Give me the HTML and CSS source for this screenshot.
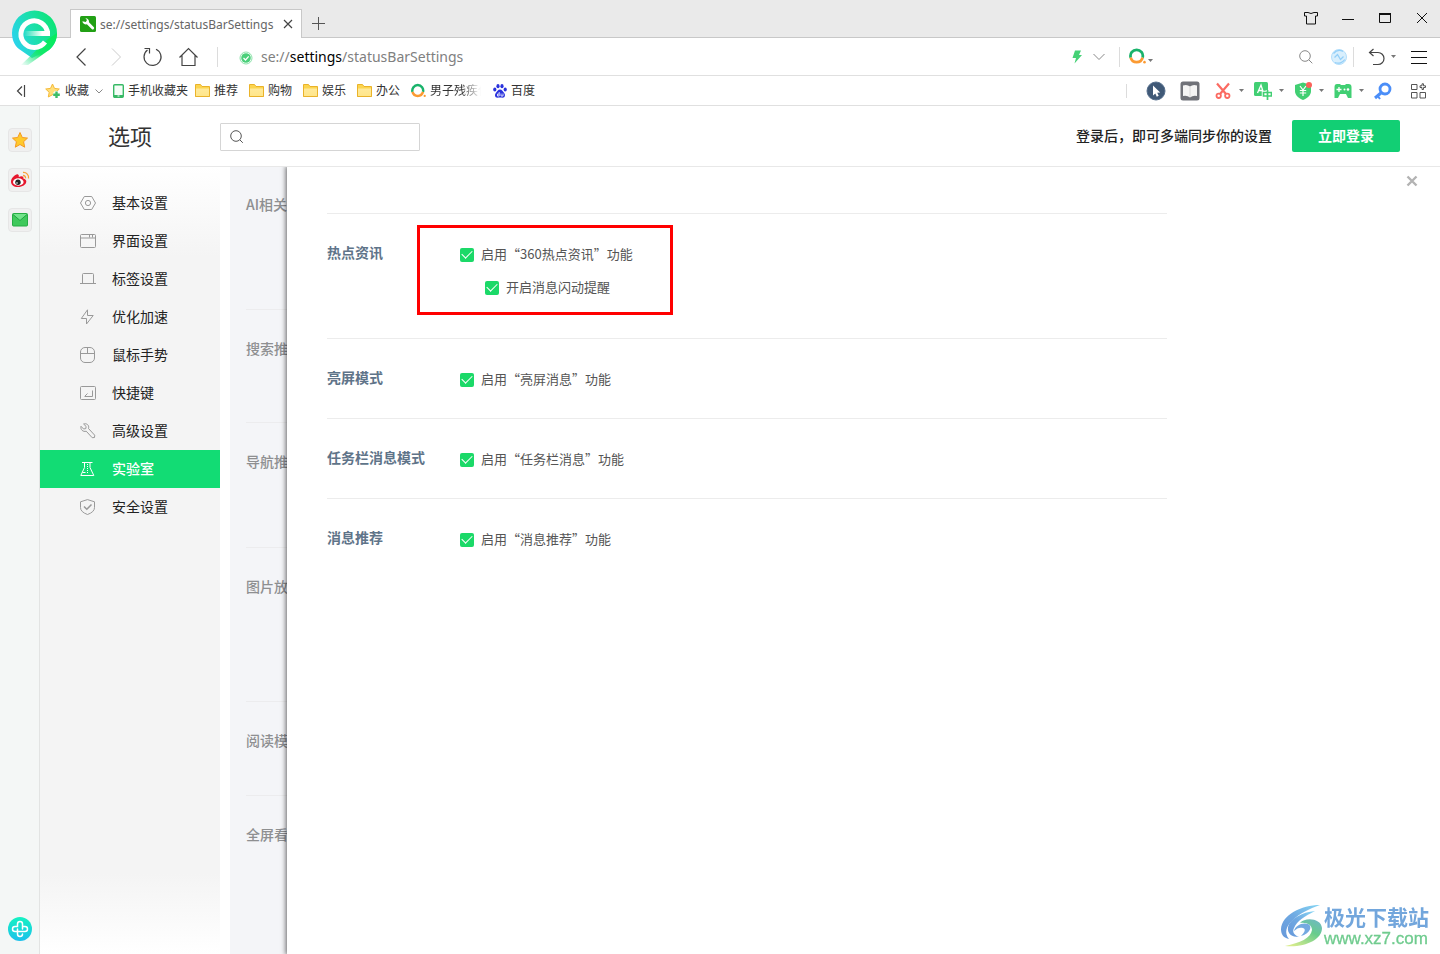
FILE: index.html
```html
<!DOCTYPE html>
<html lang="zh-CN">
<head>
<meta charset="utf-8">
<title>选项</title>
<link rel="stylesheet" href="styles.css">
</head>
<body>
<svg class="defs" width="0" height="0" aria-hidden="true">
  <defs>
    <linearGradient id="folderFill" x1="0" y1="0" x2="0" y2="1"><stop offset="0" stop-color="#ffe99b"/><stop offset="1" stop-color="#ffe68a"/></linearGradient>
  </defs>
  <symbol id="folder" viewBox="0 0 15 14">
    <path d="M.5 12.500V.5h5l1.500 2h7.500v10z" fill="#fcd54f" stroke="#eab32a"/>
    <path d="M1 4.500h13V12H1z" fill="url(#folderFill)"/>
    <path d="M.5 12.500h14" stroke="#e9b22b"/>
  </symbol>
  <symbol id="so" viewBox="0 0 16 16">
    <path d="M1.600 9a5.800 5.800 0 1 1 11.200 0" fill="none" stroke="#19b36b" stroke-width="2.600"/>
    <path d="M1.600 9a5.800 5.800 0 0 0 11.200 0" fill="none" stroke="#fb9a32" stroke-width="2.600"/>
    <circle cx="14.600" cy="13.300" r="1.200" fill="#fb9a32"/>
  </symbol>
  <symbol id="caret" viewBox="0 0 5 3"><path d="M0 0h5L2.500 3z" fill="#777"/></symbol>
</svg>

<header class="titlebar">
  <svg class="logo" width="48" height="58" viewBox="0 0 48 58" role="img" aria-label="360">
    <defs>
      <linearGradient id="lg" x1="0" y1=".7" x2="1" y2=".3"><stop offset="0" stop-color="#2bd2f2"/><stop offset=".5" stop-color="#1ddfae"/><stop offset="1" stop-color="#0be573"/></linearGradient>
      <linearGradient id="tail" x1="1" y1="0" x2="0" y2="1"><stop offset="0" stop-color="#03ec5c"/><stop offset=".55" stop-color="#13e86b"/><stop offset="1" stop-color="#3fe6a0" stop-opacity=".05"/></linearGradient>
      <linearGradient id="bar" x1="0" x2="1"><stop offset="0" stop-color="#fff" stop-opacity="0"/><stop offset=".7" stop-color="#fff"/></linearGradient>
    </defs>
    <path d="M2 24a22.500 22.500 0 1 1 45 0c0 7-3 13-8 17L22 49 9 40C4 36 2 30 2 24z" fill="url(#lg)"/>
    <path d="M47 24c0 8-4 13-8 17L18 56H11L38 30z" fill="url(#tail)"/>
    <path d="M37.500 24.500A13.300 13.300 0 1 0 35 33" fill="none" stroke="#fff" stroke-width="5"/>
    <path d="M14 22h26v5H14z" fill="url(#bar)"/>
  </svg>
  <div class="tab">
    <svg width="16" height="16" viewBox="0 0 16 16"><rect width="16" height="16" rx="1.500" fill="#22a015"/><path d="M2.400 5.200a3.500 3.500 0 0 0 4.500 3.100l4.800 4.700a1.400 1.400 0 0 0 2-2L9 6.300A3.500 3.500 0 0 0 5.400 2.200L7 4 5.800 6z" fill="#fff"/></svg>
    <span class="tab-title">se://settings/statusBarSettings</span>
    <button class="icon-btn" aria-label="关闭标签"><svg width="10" height="10" viewBox="0 0 10 10" class="line nav"><path d="M1 1l8 8M9 1L1 9"/></svg></button>
  </div>
  <button class="icon-btn new-tab" aria-label="新标签"><svg width="14" height="14" viewBox="0 0 14 14" class="line"><path d="M7 .5v13M.5 7h13" shape-rendering="crispEdges"/></svg></button>
  <div class="window-buttons">
    <button class="icon-btn" aria-label="皮肤"><svg width="16" height="14" viewBox="0 0 16 14" class="line dark"><path d="M1.500 1.500h3.500q3 2 6 0h3.500v3.500h-2v8h-9V5h-2z"/></svg></button>
    <button class="icon-btn" aria-label="最小化"><svg width="12" height="12" viewBox="0 0 12 12" class="line dark"><path d="M0 7.500h12"/></svg></button>
    <button class="icon-btn" aria-label="最大化"><svg width="12" height="12" viewBox="0 0 12 12" class="line dark"><path d="M.5 1.500h11v9H.5z"/><path d="M0 2h12" stroke-width="2"/></svg></button>
    <button class="icon-btn" aria-label="关闭"><svg width="12" height="12" viewBox="0 0 12 12" class="line dark"><path d="M1 1l10 10M11 1L1 11"/></svg></button>
  </div>
</header>

<div class="toolbar">
  <div class="nav-buttons">
    <button class="icon-btn" aria-label="后退"><svg width="20" height="20" viewBox="0 0 20 20" class="line nav"><path d="M14.500 1.500L6 10l8.500 8.500"/></svg></button>
    <button class="icon-btn" aria-label="前进"><svg width="20" height="20" viewBox="0 0 20 20" class="line faint"><path d="M5 1.500L13.500 10 5 18.500"/></svg></button>
    <button class="icon-btn" aria-label="刷新"><svg width="20" height="20" viewBox="0 0 20 20" class="line nav"><path d="M13 2.200A8.500 8.500 0 1 1 4.500 3.100M1.500 1.500h5v5"/></svg></button>
    <button class="icon-btn" aria-label="主页"><svg width="20" height="20" viewBox="0 0 20 20" class="line nav"><path d="M.5 10.500L9.500 1.500l9 9M3 8.500v10h13v-10"/></svg></button>
  </div>
  <span class="sep"></span>
  <div class="address">
    <svg width="14" height="14" viewBox="0 0 14 14"><circle cx="7" cy="7" r="6" fill="#fff" stroke="#8ee3ab"/><circle cx="7" cy="7" r="4.800" fill="#4bd07a"/><path d="M4.500 7l2 2 3.200-3.700" fill="none" stroke="#fff" stroke-width="1.200"/></svg>
    <div class="url">se://<b>settings</b>/statusBarSettings</div>
  </div>
  <button class="icon-btn slot" aria-label="极速模式"><svg width="12" height="14" viewBox="0 0 12 14"><path d="M4 .5h6L8 5h3L3.500 13.500 5 8H1.500z" fill="#45d176"/></svg></button>
  <button class="icon-btn slot" aria-label="展开"><svg width="12" height="8" viewBox="0 0 12 8" class="line gray"><path d="M.5 1L6 6.500 11.500 1"/></svg></button>
  <span class="sep wide"></span>
  <button class="icon-btn engine" aria-label="搜索引擎"><svg width="17" height="17" viewBox="0 0 17 17"><use href="#so" width="17" height="17"/></svg><svg class="caret low" width="5" height="3"><use href="#caret"/></svg></button>
  <input class="quick-search" type="text" aria-label="搜索">
  <button class="icon-btn slot" aria-label="搜索"><svg width="14" height="14" viewBox="0 0 14 14" class="line gray"><circle cx="6" cy="6" r="5.300"/><path d="M9.800 9.800l3.500 3.500"/></svg></button>
  <button class="icon-btn shield" aria-label="同步"><svg width="16" height="16" viewBox="0 0 16 16"><circle cx="8" cy="8" r="7.500" fill="#d9effd" stroke="#b3defb"/><path d="M2.500 4.500A8 8 0 0 1 12 2.300M13.800 10.500A8 8 0 0 1 4 13.500M3.500 8.500l3-3 3 5 3-3" fill="none" stroke="#93cff8" stroke-width="1.300"/></svg></button>
  <span class="sep"></span>
  <button class="icon-btn undo" aria-label="撤销"><svg width="18" height="18" viewBox="0 0 18 18" class="line nav"><path d="M5.500 1L1.500 4.500l4 3.500M1.500 4.500H10a6 6 0 0 1 0 12H5"/></svg><svg class="caret" width="5" height="3"><use href="#caret"/></svg></button>
  <button class="icon-btn menu" aria-label="菜单"><svg width="16" height="14" viewBox="0 0 16 14" class="line dark"><path d="M0 1.500h16M0 7.500h16M0 13.500h16"/></svg></button>
</div>

<nav class="bookmarks" aria-label="收藏栏">
  <div class="pinned">
    <button class="icon-btn" aria-label="收起"><svg width="10" height="12" viewBox="0 0 10 12" class="line nav"><path d="M6 1.500L1.500 6 6 10.500M8.500 0v12"/></svg></button>
    <button class="mark fav"><svg width="16" height="16" viewBox="0 0 16 16"><path d="M7.500 1l2 4.400 4.800.6-3.500 3.300.9 4.700-4.200-2.300L3.300 14l.9-4.700L.7 6l4.800-.6z" fill="#ffdf7a" stroke="#f5b936"/><path d="M11.500 8v7M8 11.500h7" stroke="#fff" stroke-width="4"/><path d="M11.500 8.500v6.500M8.200 11.700h6.600" stroke="#3dbd68" stroke-width="2.400"/></svg><span>收藏</span><svg class="fav-more line gray" width="8" height="6" viewBox="0 0 8 6"><path d="M.5 1.500L4 5l3.500-3.500"/></svg></button>
    <a class="mark" href="#"><svg width="11" height="14" viewBox="0 0 11 14"><rect x=".7" y=".7" width="9.600" height="12.600" rx="1" fill="#f4fdf7" stroke="#37b965" stroke-width="1.400"/><path d="M1 11h9v2H1z" fill="#37b965"/><path d="M4.500 12h2" stroke="#fff"/></svg><span>手机收藏夹</span></a>
  </div>
  <div class="folders">
    <a class="mark" href="#"><svg width="15" height="14"><use href="#folder"/></svg><span>推荐</span></a>
    <a class="mark" href="#"><svg width="15" height="14"><use href="#folder"/></svg><span>购物</span></a>
    <a class="mark" href="#"><svg width="15" height="14"><use href="#folder"/></svg><span>娱乐</span></a>
    <a class="mark" href="#"><svg width="15" height="14"><use href="#folder"/></svg><span>办公</span></a>
    <a class="mark" href="#"><svg width="15" height="16"><use href="#so"/></svg><span class="fade">男子残疾住</span></a>
    <a class="mark" href="#"><svg width="14" height="14" viewBox="0 0 14 14" fill="#2a32dc"><ellipse cx="1.800" cy="5.500" rx="1.600" ry="2"/><ellipse cx="5" cy="2.200" rx="1.600" ry="2.100"/><ellipse cx="9" cy="2.200" rx="1.600" ry="2.100"/><ellipse cx="12.200" cy="5.500" rx="1.600" ry="2"/><path d="M7 5.500c2 0 2.500 1.800 4 3.200 1.500 1.500 1.500 5-1.500 5-1 0-1.500-.2-2.500-.2s-1.500.2-2.500.2c-3 0-3-3.500-1.500-5C4.500 7.300 5 5.500 7 5.500z"/><path d="M6.200 8v4H4.500v-2h1.700M8 9.500V12h2V9.500" fill="none" stroke="#fff" stroke-width=".8"/></svg><span>百度</span></a>
  </div>
  <div class="extensions">
    <span class="sep short"></span>
    <button class="icon-btn" aria-label="鼠标"><svg width="20" height="20" viewBox="0 0 20 20"><circle cx="10" cy="10" r="9" fill="#405977" stroke="#57708e"/><path d="M7 4.500v10l2.300-2 1.500 3.200 1.900-.9-1.500-3.100 3-.3z" fill="#fff"/></svg></button>
    <button class="icon-btn" aria-label="阅读"><svg width="20" height="20" viewBox="0 0 20 20"><rect x=".5" y=".5" width="19" height="19" rx="2.500" fill="#6f7178"/><path d="M3 4.500q4-1.500 7 1 3-2.500 7-1V15q-4-1-7 1.500Q7 14 3 15z" fill="#f4f4f4"/><path d="M10 6v10" stroke="#d8d8d8"/></svg></button>
    <button class="icon-btn ext" aria-label="截图"><svg width="18" height="18" viewBox="0 0 18 18" fill="none" stroke="#fb6b62" stroke-width="2.200"><path d="M3 1.500l9 10.500M15 1.500L6 12"/><circle cx="4.700" cy="13.800" r="2.200" stroke-width="1.800"/><circle cx="13.300" cy="13.800" r="2.200" stroke-width="1.800"/></svg><svg width="5" height="3"><use href="#caret"/></svg></button>
    <button class="icon-btn ext" aria-label="翻译"><svg width="18" height="18" viewBox="0 0 18 18"><rect width="14" height="14" rx="1.500" fill="#41cf73"/><path d="M3.500 11L7 3l2.500 8M4.700 8.500h4" fill="none" stroke="#fff" stroke-width="1.300"/><path d="M13.500 8v10M9.500 10.500h8v3.500h-8z" fill="none" stroke="#fff" stroke-width="3.500"/><path d="M13.500 8v10M9.500 10.500h8v3.500h-8z" fill="none" stroke="#41cf73" stroke-width="1.700"/></svg><svg width="5" height="3"><use href="#caret"/></svg></button>
    <button class="icon-btn ext" aria-label="网购"><svg width="18" height="18" viewBox="0 0 18 18"><path d="M9 .5L17 3v6c0 4-3 7-8 9-5-2-8-5-8-9V3z" fill="#41cf73"/><path d="M6 4l3 4 3-4M9 8v6M5.800 8.500h6.400M5.800 11h6.400" fill="none" stroke="#fff" stroke-width="1.200"/><circle cx="15" cy="3" r="3" fill="#fb625a"/></svg><svg width="5" height="3"><use href="#caret"/></svg></button>
    <button class="icon-btn ext" aria-label="游戏"><svg width="18" height="18" viewBox="0 0 18 18"><path d="M3 2h3l1 1h4l1-1h2.500q3 0 3 3v11H14l-2-4H6l-2 4H.5V5q0-3 2.500-3z" fill="#41cf73"/><path d="M2.500 7.500h5M5 5v5" stroke="#fff" stroke-width="1.300"/><circle cx="10.500" cy="7.500" r="1" fill="#fff"/><circle cx="14" cy="7.500" r="1.300" fill="#fff"/></svg><svg width="5" height="3"><use href="#caret"/></svg></button>
    <button class="icon-btn" aria-label="密码"><svg width="18" height="18" viewBox="0 0 18 18" fill="none" stroke="#4b8ef8"><circle cx="11" cy="7" r="5" stroke-width="2.800"/><path d="M7.500 10.500L1 16" stroke-width="3"/><path d="M3 13l3 4" stroke-width="2"/></svg></button>
    <button class="icon-btn grid-btn" aria-label="扩展"><svg width="16" height="16" viewBox="0 0 16 16" class="line"><path d="M.5 1.500h5.500v5H.5zM.5 9.500h5.500v5.500H.5zM9 9.500h5.500v5.500H9zM11 .8h1.500v2h2v1.700h-2v2H11v-2H9V2.800h2z"/></svg></button>
  </div>
</nav>

<div class="workspace">
  <aside class="rail">
    <button class="rail-btn" aria-label="收藏"><svg width="18" height="18" viewBox="0 0 18 18"><path d="M9 1.500l2.300 5 5.200.6-3.900 3.600 1.100 5.500L9 13.500l-4.700 2.700 1.100-5.500L1.500 7.100l5.200-.6z" fill="#ffca2d" stroke="#f59a23"/></svg></button>
    <button class="rail-btn" aria-label="微博"><svg width="20" height="18" viewBox="0 0 20 18"><path d="M1 10.500C1 7 6 2.500 8 3.500c1 .5 1 1.500.7 2.500C12 4.500 14 5.500 13.300 7.500c2 .5 3 1.700 3 3 0 3-4 5.500-8.300 5.500S1 14 1 10.500z" fill="#e6162d"/><ellipse cx="8.300" cy="11" rx="5.300" ry="3.700" fill="#fff"/><circle cx="8" cy="11.200" r="2.700" fill="#222"/><circle cx="7" cy="12" r=".8" fill="#fff"/><path d="M13 1.500a5 5 0 0 1 5.500 6M13 4.500a2.300 2.300 0 0 1 2.500 2.800" fill="none" stroke="#f8a13a" stroke-width="1.300"/></svg></button>
    <button class="rail-btn" aria-label="邮件"><svg width="16" height="14" viewBox="0 0 16 14"><rect x=".5" y=".5" width="15" height="12.500" rx="1" fill="#40c95c" stroke="#27ad45"/><path d="M1 1h14L8 7.500z" fill="#72e38a"/><path d="M1 1.500l7 6 7-6" fill="none" stroke="#20a542"/></svg></button>
    <button class="icon-btn rail-add" aria-label="添加"><svg width="24" height="24" viewBox="0 0 24 24"><defs><linearGradient id="add" x1="0" y1="0" x2="0" y2="1"><stop offset="0" stop-color="#15f3c2"/><stop offset="1" stop-color="#1bc0ec"/></linearGradient></defs><circle cx="12" cy="12" r="12" fill="url(#add)"/><path d="M14.500 12V7a2.500 2.500 0 0 0-5 0v2.500H7a2.500 2.500 0 0 0 0 5h10a2.500 2.500 0 0 0 0-5h-2.500M9.500 12v5a2.500 2.500 0 0 0 5 0" fill="none" stroke="#fff" stroke-width="1.500" stroke-linecap="round"/></svg></button>
  </aside>

  <main class="page">
    <div class="page-head">
      <h1>选项</h1>
      <label class="search"><svg width="14" height="14" viewBox="0 0 14 14" class="line"><circle cx="6" cy="6" r="5.300"/><path d="M9.800 9.800l3 3"/></svg><input type="text" aria-label="搜索设置"></label>
      <p class="sync">登录后，即可多端同步你的设置</p>
      <button class="login">立即登录</button>
    </div>

    <div class="body">
      <nav class="side" aria-label="设置">
        <a href="#"><svg width="16" height="16" viewBox="0 0 16 16"><path d="M4.300 1.500h7.400L15.500 8l-3.800 6.500H4.300L.5 8z"/><circle cx="8" cy="8" r="2.600"/></svg><span>基本设置</span></a>
        <a href="#"><svg width="16" height="16" viewBox="0 0 16 16"><rect x=".5" y="1.500" width="15" height="13" rx="1"/><path d="M.5 5h15M9.500 2v2.500M12.500 2v2.500"/></svg><span>界面设置</span></a>
        <a href="#"><svg width="16" height="16" viewBox="0 0 16 16"><path d="M0 12.500h16M2.500 12V3.500q0-1 1-1h9q1 0 1 1V12"/></svg><span>标签设置</span></a>
        <a href="#"><svg width="16" height="16" viewBox="0 0 16 16"><path d="M7.500.8v5.700h5.700L6.500 15V9.500H1.300z"/></svg><span>优化加速</span></a>
        <a href="#"><svg width="16" height="16" viewBox="0 0 16 16"><rect x=".5" y=".5" width="14" height="15" rx="4.500"/><path d="M.5 6.500h14M7.500.5v6"/></svg><span>鼠标手势</span></a>
        <a href="#"><svg width="16" height="16" viewBox="0 0 16 16"><rect x=".5" y="1.500" width="15" height="13" rx="1"/><path d="M12.500 5.500v6H5M7.500 8.500l-3 3"/></svg><span>快捷键</span></a>
        <a href="#"><svg width="16" height="16" viewBox="0 0 16 16"><path d="M1 3.300L3.600 6l2.200-.4.300-2.200L3.600 1C6.500 0 9.500 2 8.500 5.500l6.200 6.700-.2 2.300-2.300.2-6-6.500C3 9.200.2 6.500 1 3.300z"/></svg><span>高级设置</span></a>
        <a class="active" href="#" aria-current="page"><svg width="16" height="16" viewBox="0 0 16 16"><path d="M2 1.500h10.500M4.500 2v4.500L.8 14.500h13L10 6.500V2M2.500 11.500h3"/><path d="M7.500 3v9" stroke-dasharray="1 1"/></svg><span>实验室</span></a>
        <a href="#"><svg width="16" height="16" viewBox="0 0 16 16"><path d="M7.500.6l7 2.200v5.700q0 4.500-7 7-7-2.500-7-7V2.800z"/><path d="M4 7.500l2.800 2.800L11.500 5.500" stroke-width="1.500"/></svg><span>安全设置</span></a>
      </nav>

      <div class="stage">
        <div class="lab" aria-hidden="true">
          <section class="lab-ai">AI相关</section>
          <section class="lab-search">搜索推荐</section>
          <section class="lab-guide">导航推荐</section>
          <section class="lab-image">图片放大</section>
          <section class="lab-read">阅读模式</section>
          <section>全屏看图</section>
        </div>

        <div class="drawer" role="dialog" aria-label="消息设置">
          <button class="icon-btn drawer-close" aria-label="关闭"><svg width="12" height="12" viewBox="0 0 12 12"><path d="M1.500 1.500l9 9M10.500 1.500l-9 9" stroke="#b3b3b3" stroke-width="2.400"/></svg></button>
          <section class="setting marked">
            <h2>热点资讯</h2>
            <div class="options">
              <label><input type="checkbox" checked><span>启用“360热点资讯”功能</span></label>
              <label class="sub"><input type="checkbox" checked><span>开启消息闪动提醒</span></label>
            </div>
          </section>
          <section class="setting">
            <h2>亮屏模式</h2>
            <div class="options"><label><input type="checkbox" checked><span>启用“亮屏消息”功能</span></label></div>
          </section>
          <section class="setting">
            <h2>任务栏消息模式</h2>
            <div class="options"><label><input type="checkbox" checked><span>启用“任务栏消息”功能</span></label></div>
          </section>
          <section class="setting">
            <h2>消息推荐</h2>
            <div class="options"><label><input type="checkbox" checked><span>启用“消息推荐”功能</span></label></div>
          </section>
        </div>
      </div>
    </div>
  </main>
</div>

<div class="watermark">
  <svg width="42" height="42" viewBox="0 0 42 42" aria-hidden="true">
    <defs>
      <linearGradient id="wb" x1="1" y1="0" x2="0" y2="1"><stop offset="0" stop-color="#86d6f4"/><stop offset=".5" stop-color="#6fa9e2"/><stop offset="1" stop-color="#6798da"/></linearGradient>
      <linearGradient id="wg" x1=".9" y1="0" x2=".2" y2="1"><stop offset="0" stop-color="#6fb8c4"/><stop offset=".4" stop-color="#68cc8c"/><stop offset="1" stop-color="#d9ec8c"/></linearGradient>
    </defs>
    <path d="M39 0C20 0 1 10 0 24c0 6 3 9 8 10-5-6-3-13 4-19C19 8 28 4 39 0z" fill="url(#wb)"/>
    <path d="M34 6C21 7 9 14 7 22c-1 7 4 10 11 10-5-2-7-5-5-9 3-7 11-12 21-17z" fill="url(#wb)"/>
    <path d="M19 18c5-6 21-5 22 5 0 12-18 20-37 18 15-3 26-8 27-16 0-5-5-8-12-7z" fill="url(#wg)"/>
    <path d="M13 26c1-5 8-9 14-7 5 2 2 10-7 12 4-4 5-7 2-8-3-1-6 0-9 3z" fill="#74a9e0"/>
  </svg>
  <div class="watermark-text"><strong>极光下载站</strong><span>www.xz7.com</span></div>
</div>
</body>
</html>
```
FILE: styles.css
```css
*, *::before, *::after { box-sizing: border-box; }

body {
  margin: 0;
  min-height: 100vh;
  display: flex;
  flex-direction: column;
  background: #fff;
  color: #333;
  font: 14px/20px "Noto Sans CJK SC", "Noto Sans", sans-serif;
}

button, input { font: inherit; color: inherit; }
a { color: inherit; text-decoration: none; }
svg { flex: none; display: block; }
.defs { position: absolute; }

.icon-btn {
  display: flex;
  align-items: center;
  justify-content: center;
  padding: 0;
  border: 0;
  background: none;
}

.line { fill: none; stroke: #555; }
.line.dark { stroke: #111; }
.line.nav { stroke: #444; stroke-width: 1.2; }
.line.gray { stroke: #888; }
.line.faint { stroke: #ccc; }

.sep { width: 1px; height: 20px; background: #dcdcdc; }
.sep.wide { margin: 0 9px; }
.sep.short { height: 14px; margin-right: 5px; }

/* Title bar */
.titlebar {
  position: relative;
  display: flex;
  align-items: flex-end;
  height: 38px;
  padding-left: 70px;
  background: #eaeaea;
  border-bottom: 1px solid #c8c8c8;
}
.logo { position: absolute; left: 10px; top: 9px; z-index: 2; }
.tab {
  display: flex;
  align-items: center;
  gap: 4px;
  width: 232px;
  height: 29px;
  margin-bottom: -1px;
  padding: 0 8px 0 9px;
  background: #fff;
  border: 1px solid #c8c8c8;
  border-bottom: 0;
}
.tab-title {
  flex: 1;
  padding-top: 2px;
  white-space: nowrap;
  font: 12px/20px "Noto Sans", sans-serif;
  color: #666;
}
.new-tab { width: 32px; height: 28px; }
.window-buttons { display: flex; gap: 1px; margin-left: auto; height: 36px; align-self: flex-start; }
.window-buttons .icon-btn { width: 36px; }

/* Toolbar */
.toolbar {
  display: flex;
  align-items: center;
  height: 38px;
  padding: 0 13px 0 71px;
  border-bottom: 1px solid #e0e0e0;
}
.nav-buttons { display: flex; gap: 16px; margin-right: 18px; }
.address { display: flex; align-items: center; gap: 8px; flex: 1; padding-left: 21px; }
.address svg { margin-top: 2px; }
.url { font: 14px/20px "Noto Sans", sans-serif; color: #808080; }
.url b { font-weight: 400; color: #000; }
.slot { width: 22px; height: 22px; }
.engine { gap: 2px; }
.caret.low { margin-top: 8px; }
.quick-search { width: 142px; border: 0; background: none; outline: 0; }
.shield { margin: 0 6px 0 14px; }
.undo { gap: 5px; margin: 0 15px 0 14px; }

/* Bookmark bar */
.bookmarks {
  display: flex;
  align-items: center;
  height: 30px;
  padding: 0 13px 0 16px;
  border-bottom: 1px solid #e0e0e0;
  font-size: 12px;
}
.pinned, .folders, .extensions { display: flex; align-items: center; }
.pinned { gap: 10px; }
.folders { gap: 11px; margin-left: 7px; }
.extensions { gap: 14px; margin-left: auto; }
.mark {
  display: flex;
  align-items: center;
  gap: 4px;
  padding: 0;
  border: 0;
  background: none;
  white-space: nowrap;
}
.mark span { padding-bottom: 1px; }
.fav { margin-left: 9px; }
.fav-more { margin-left: 2px; }
.fade {
  width: 52px;
  overflow: hidden;
  -webkit-mask-image: linear-gradient(90deg, #000 60%, transparent 98%);
  mask-image: linear-gradient(90deg, #000 60%, transparent 98%);
}
.ext { gap: 7px; margin-right: -4px; }
.grid-btn { margin-left: 5px; }

/* Workspace */
.workspace { flex: 1; display: flex; }
.rail {
  display: flex;
  flex-direction: column;
  align-items: center;
  gap: 16px;
  width: 40px;
  padding: 22px 0 13px;
  background: #f4f7f6;
  border-right: 1px solid #e2e4e3;
}
.rail-btn {
  display: flex;
  align-items: center;
  justify-content: center;
  width: 24px;
  height: 24px;
  padding: 0;
  border: 1px solid #e6e6e6;
  border-radius: 4px;
  background: #f0f0f0;
}
.rail-add { margin-top: auto; }

.page { flex: 1; min-width: 0; display: flex; flex-direction: column; }
.page-head {
  display: flex;
  align-items: center;
  height: 61px;
  padding: 0 40px 0 68px;
  border-bottom: 1px solid #e8e8e8;
}
h1 { margin: 0 68px 2px 0; font-size: 22px; line-height: 32px; font-weight: 400; }
.search {
  display: flex;
  align-items: center;
  gap: 8px;
  width: 200px;
  height: 28px;
  margin-top: 2px;
  padding: 0 9px;
  border: 1px solid #d5d5d5;
  border-radius: 1px;
}
.search input { flex: 1; min-width: 0; border: 0; outline: 0; background: none; }
.sync { margin: 0 20px 2px auto; font-weight: 500; color: #222; }
.login {
  width: 108px;
  height: 32px;
  padding: 0 0 2px;
  border: 0;
  border-radius: 2px;
  background: #12cf74;
  color: #fff;
  font-weight: 700;
}

.body { flex: 1; display: flex; }
.side {
  width: 180px;
  padding-top: 17px;
  background: linear-gradient(#fff, #f4f4f4 90px, #f4f4f4 calc(100% - 80px), #fff);
}
.side a {
  display: flex;
  align-items: center;
  gap: 16px;
  height: 38px;
  padding-left: 40px;
  color: #222;
}
.side span { padding-bottom: 2px; }
.side svg { fill: none; stroke: #999; }
.side .active { background: #12dc74; color: #fff; font-weight: 500; }
.side .active svg { stroke: #fff; }

.stage { position: relative; flex: 1; margin-left: 10px; overflow: hidden; background: #f4f5f8; }
.lab { margin-left: 16px; color: #8e8f91; font-weight: 500; }
.lab section { height: 113px; padding-top: 28px; border-top: 1px solid #ececee; }
.lab .lab-ai { height: 142px; padding-top: 27px; border-top: 0; }
.lab .lab-guide { height: 125px; }
.lab .lab-image { height: 154px; }
.lab .lab-read { height: 94px; }

/* Drawer slides over the lab settings */
.drawer {
  position: absolute;
  inset: 0 0 0 57px;
  padding: 46px 40px 0;
  background: #fff;
  box-shadow: 0 0 5px 1px rgba(0, 0, 0, .6);
}
.drawer-close { position: absolute; top: 8px; right: 22px; }
.setting {
  position: relative;
  display: grid;
  grid-template-columns: 133px 1fr;
  max-width: 840px;
  padding: 24px 0 22px;
  border-top: 1px solid #ececec;
}
.setting h2 { margin: 0; font-size: 14px; line-height: 28px; font-weight: 700; color: #5f7489; }
.marked { padding-bottom: 34px; }
.marked::after {
  content: "";
  position: absolute;
  left: 90px;
  top: 11px;
  width: 256px;
  height: 90px;
  border: 3px solid #f00;
  pointer-events: none;
}
.options { display: flex; flex-direction: column; font-size: 13px; color: #555; }
.options label { display: flex; align-items: center; gap: 7px; height: 33px; }
.options span { padding-bottom: 1px; }
.options .sub { padding-left: 25px; }
.options input {
  appearance: none;
  display: grid;
  place-items: center;
  width: 14px;
  height: 14px;
  margin: 0;
  border-radius: 2px;
  background: #1bd968;
}
.options input:checked::after {
  content: "";
  width: 10px;
  height: 6px;
  margin-bottom: 3px;
  border: solid #fff;
  border-width: 0 0 1px 1px;
  transform: rotate(-45deg);
}

.watermark { position: fixed; right: 11px; bottom: 6px; display: flex; align-items: center; gap: 1px; }
.watermark-text { display: flex; flex-direction: column; }
.watermark strong { font-size: 21px; line-height: 26px; color: #72a6dc; }
.watermark span { font: 17px/19px "Liberation Sans", Arial, sans-serif; color: #6fcb8e; -webkit-text-stroke: 0.3px #6fcb8e; }
```
